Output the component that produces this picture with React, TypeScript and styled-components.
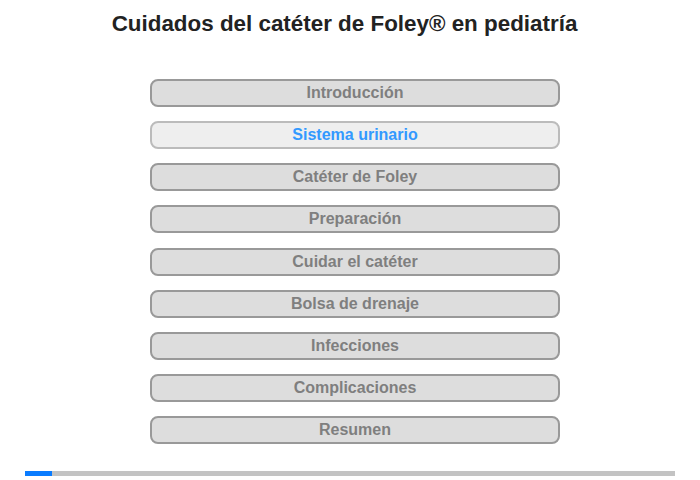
import React from "react";
import styled, { createGlobalStyle } from "styled-components";

const Global = createGlobalStyle`
  html, body { margin: 0; padding: 0; background: #ffffff; }
  body { font-family: "Liberation Sans", Arial, sans-serif; }
`;

const Page = styled.div`
  width: 700px;
  height: 480px;
  display: flex;
  flex-direction: column;
  align-items: stretch;
  box-sizing: border-box;
`;

const Title = styled.h1`
  margin: 11px 0 0 0;
  padding-right: 11px;
  font-size: 22.4px;
  line-height: 26px;
  font-weight: bold;
  color: #222222;
  text-align: center;
`;

const Menu = styled.nav`
  display: flex;
  flex-direction: column;
  align-items: center;
  gap: 14.13px;
  margin-top: 42px;
  padding-left: 10px;
`;

const Item = styled.div<{ $active?: boolean }>`
  box-sizing: border-box;
  width: 410px;
  height: 28px;
  border: 2px solid ${(p) => (p.$active ? "#bbbbbb" : "#999999")};
  border-radius: 8px;
  background: ${(p) => (p.$active ? "#eeeeee" : "#dddddd")};
  color: ${(p) => (p.$active ? "#3399ff" : "#7f7f7f")};
  font-size: 16px;
  font-weight: bold;
  display: flex;
  align-items: center;
  justify-content: center;
  line-height: 1;
`;

const Progress = styled.div`
  margin: 27px 25px 0 25px;
  height: 5px;
  background: #c3c3c3;
  display: flex;
`;

const Fill = styled.div`
  height: 100%;
  background: #0a7cff;
`;

const items = [
  "Introducción",
  "Sistema urinario",
  "Catéter de Foley",
  "Preparación",
  "Cuidar el catéter",
  "Bolsa de drenaje",
  "Infecciones",
  "Complicaciones",
  "Resumen",
];

export default function App() {
  return (
    <Page>
      <Global />
      <Title>Cuidados del catéter de Foley® en pediatría</Title>
      <Menu>
        {items.map((t, i) => (
          <Item key={t} $active={i === 1}>
            {t}
          </Item>
        ))}
      </Menu>
      <Progress>
        <Fill style={{ width: `${(27 / 650) * 100}%` }} />
      </Progress>
    </Page>
  );
}
